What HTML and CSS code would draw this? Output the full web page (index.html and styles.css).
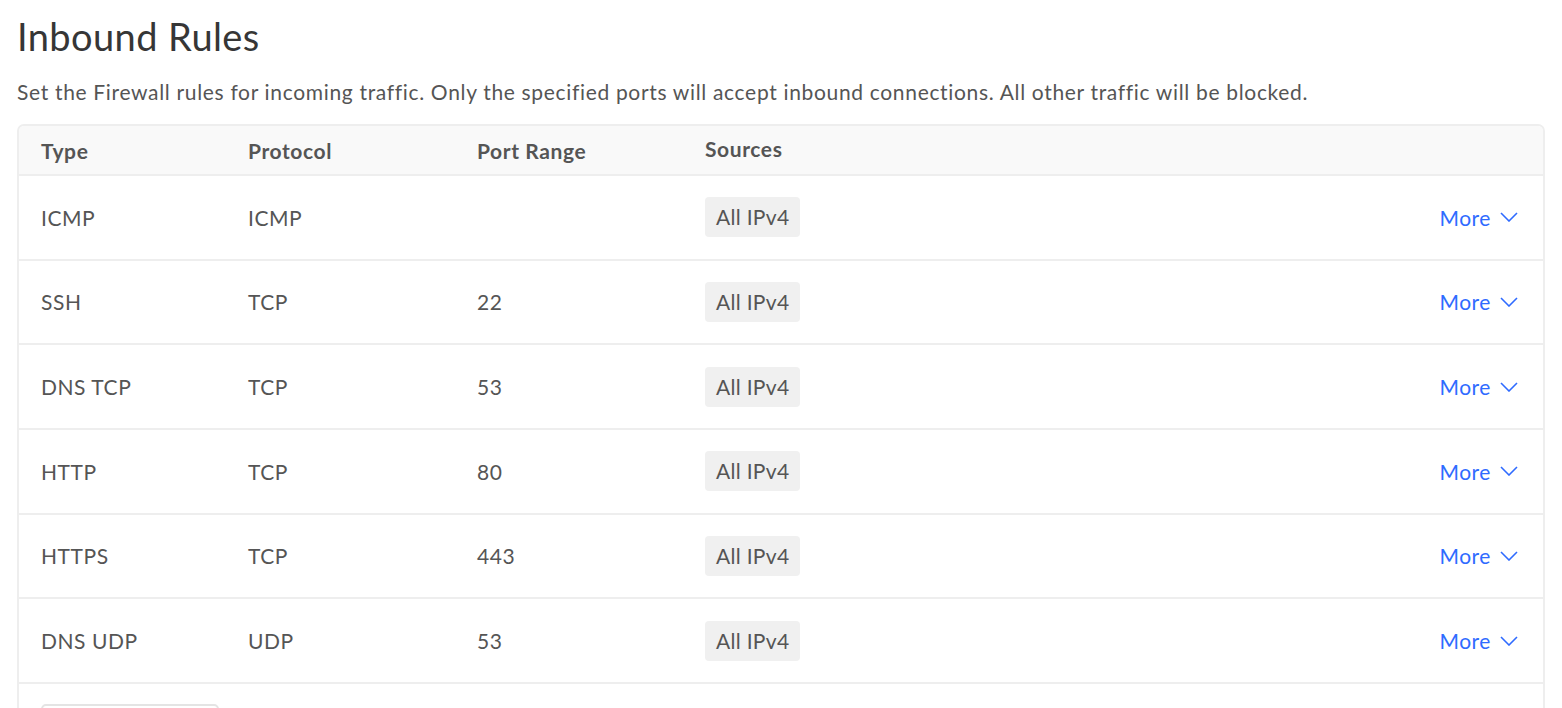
FILE: index.html
```html
<!DOCTYPE html>
<html>
<head>
<meta charset="utf-8">
<link rel="stylesheet" href="styles.css">
</head>
<body>
<main class="page">
  <h1 class="title">Inbound Rules</h1>
  <p class="desc">Set the Firewall rules for incoming traffic. Only the specified ports will accept inbound connections. All other traffic will be blocked.</p>
  <div class="table">
    <div class="row head">
      <div>Type</div><div>Protocol</div><div>Port Range</div><div class="src-h">Sources</div><div></div>
    </div>
    <div class="row">
      <div>ICMP</div><div>ICMP</div><div></div><div><span class="badge">All IPv4</span></div>
      <div class="more">More <svg class="chev" width="18" height="10" viewBox="0 0 18 10"><path d="M1 1 L9 9 L17 1" fill="none" stroke="currentColor" stroke-width="1.6"/></svg></div>
    </div>
    <div class="row">
      <div>SSH</div><div>TCP</div><div>22</div><div><span class="badge">All IPv4</span></div>
      <div class="more">More <svg class="chev" width="18" height="10" viewBox="0 0 18 10"><path d="M1 1 L9 9 L17 1" fill="none" stroke="currentColor" stroke-width="1.6"/></svg></div>
    </div>
    <div class="row">
      <div>DNS TCP</div><div>TCP</div><div>53</div><div><span class="badge">All IPv4</span></div>
      <div class="more">More <svg class="chev" width="18" height="10" viewBox="0 0 18 10"><path d="M1 1 L9 9 L17 1" fill="none" stroke="currentColor" stroke-width="1.6"/></svg></div>
    </div>
    <div class="row">
      <div>HTTP</div><div>TCP</div><div>80</div><div><span class="badge">All IPv4</span></div>
      <div class="more">More <svg class="chev" width="18" height="10" viewBox="0 0 18 10"><path d="M1 1 L9 9 L17 1" fill="none" stroke="currentColor" stroke-width="1.6"/></svg></div>
    </div>
    <div class="row">
      <div>HTTPS</div><div>TCP</div><div>443</div><div><span class="badge">All IPv4</span></div>
      <div class="more">More <svg class="chev" width="18" height="10" viewBox="0 0 18 10"><path d="M1 1 L9 9 L17 1" fill="none" stroke="currentColor" stroke-width="1.6"/></svg></div>
    </div>
    <div class="row">
      <div>DNS UDP</div><div>UDP</div><div>53</div><div><span class="badge">All IPv4</span></div>
      <div class="more">More <svg class="chev" width="18" height="10" viewBox="0 0 18 10"><path d="M1 1 L9 9 L17 1" fill="none" stroke="currentColor" stroke-width="1.6"/></svg></div>
    </div>
    <div class="foot">
      <button class="add" type="button" aria-label="New rule"></button>
    </div>
  </div>
</main>
</body>
</html>
```

FILE: styles.css
```css
* { box-sizing: border-box; }
html, body { margin: 0; padding: 0; background: #fff; }
body {
  font-family: "Lato", "Open Sans", sans-serif;
  color: #555;
  overflow: hidden;
}
.page { padding: 12px 17px 0 17px; width: 1562px; }
.title {
  margin: 0;
  font-size: 38px;
  letter-spacing: 0.4px;
  font-weight: 400;
  color: #363636;
  line-height: 48px;
}
.desc {
  margin: 18px 0 0 0;
  font-size: 21px;
  letter-spacing: 0.67px;
  line-height: 28px;
  color: #555;
}
.table {
  margin-top: 18px;
  border: 2px solid #eeeeee;
  border-radius: 7px;
  overflow: hidden;
}
.row {
  display: grid;
  grid-template-columns: 207px 229px 228px 1fr auto;
  align-items: center;
  padding: 0 25px 0 22px;
  height: 84.67px;
  border-bottom: 2px solid #eeeeee;
  font-size: 21px;
  letter-spacing: 0.55px;
}
.row.head {
  height: 50px;
  background: #f9f9f9;
  font-weight: 700;
  letter-spacing: 0.6px;
  color: #555;
}
.src-h { position: relative; top: -2px; }
.badge {
  display: inline-block;
  background: #f0f0f0;
  border-radius: 4px;
  padding: 0 11px;
  height: 40px;
  line-height: 40px;
  letter-spacing: 0.3px;
}
.more {
  color: #2f6bff;
  display: flex;
  align-items: center;
  gap: 9px;
}
.chev { display: block; }
.foot { padding: 20px 22px; }
.add {
  display: block;
  width: 178px;
  height: 44px;
  border: 2px solid #e4e4e4;
  border-radius: 5px;
  background: #fff;
}
```
